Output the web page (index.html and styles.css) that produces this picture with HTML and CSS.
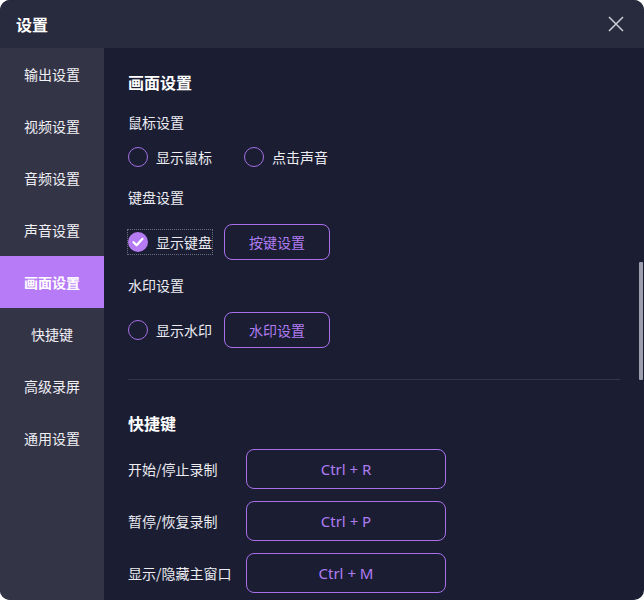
FILE: index.html
```html
<!DOCTYPE html>
<html lang="zh">
<head>
<meta charset="utf-8">
<title>设置</title>
<link rel="stylesheet" href="styles.css">
</head>
<body>
<div class="window">
  <header class="titlebar">
    <span class="title">设置</span>
    <svg class="close" width="16" height="16" viewBox="0 0 16 16"><path d="M1 1L15 15M15 1L1 15" stroke="#c9c9d3" stroke-width="1.6" fill="none"/></svg>
  </header>
  <div class="main">
    <nav class="sidebar">
      <div class="nav-item">输出设置</div>
      <div class="nav-item">视频设置</div>
      <div class="nav-item">音频设置</div>
      <div class="nav-item">声音设置</div>
      <div class="nav-item active">画面设置</div>
      <div class="nav-item">快捷键</div>
      <div class="nav-item">高级录屏</div>
      <div class="nav-item">通用设置</div>
    </nav>
    <section class="content">
      <h2 class="heading">画面设置</h2>
      <div class="label">鼠标设置</div>
      <div class="row row-radio">
        <label class="option"><span class="radio"></span>显示鼠标</label>
        <label class="option opt-second"><span class="radio"></span>点击声音</label>
      </div>
      <div class="label">键盘设置</div>
      <div class="row row-btn">
        <label class="option focused"><span class="check"><svg width="20" height="20" viewBox="0 0 20 20"><path d="M5.5 10.2L8.6 13.2L14.5 6.8" stroke="#fff" stroke-width="2.2" fill="none" stroke-linecap="round" stroke-linejoin="round"/></svg></span>显示键盘</label>
        <button class="btn">按键设置</button>
      </div>
      <div class="label">水印设置</div>
      <div class="row row-btn">
        <label class="option"><span class="radio"></span>显示水印</label>
        <button class="btn">水印设置</button>
      </div>
      <div class="divider"></div>
      <h2 class="heading heading2">快捷键</h2>
      <div class="hk-row"><span class="hk-label">开始/停止录制</span><button class="hk-btn">Ctrl + R</button></div>
      <div class="hk-row"><span class="hk-label">暂停/恢复录制</span><button class="hk-btn">Ctrl + P</button></div>
      <div class="hk-row"><span class="hk-label">显示/隐藏主窗口</span><button class="hk-btn">Ctrl + M</button></div>
      <div class="scrollbar"></div>
    </section>
  </div>
</div>
</body>
</html>
```

FILE: styles.css
```css
* { box-sizing: border-box; }
html, body { margin: 0; padding: 0; background: #ffffff; }
body {
  width: 644px;
  height: 600px;
  overflow: hidden;
  font-family: "Noto Sans CJK SC", "Noto Sans", sans-serif;
  color: #ececf2;
}
.window {
  width: 644px;
  height: 600px;
  border-radius: 10px;
  overflow: hidden;
  background: #1b1e33;
  display: flex;
  flex-direction: column;
}
.titlebar {
  height: 48px;
  flex: none;
  background: #282a3d;
  display: flex;
  align-items: center;
  justify-content: space-between;
  padding: 0 20px 0 16px;
}
.title {
  font-size: 16px;
  font-weight: 700;
  color: #ffffff;
  line-height: 20px;
}
.close { display: block; }
.main {
  flex: 1;
  display: flex;
  min-height: 0;
}
.sidebar {
  width: 104px;
  flex: none;
  background: #343447;
  display: flex;
  flex-direction: column;
}
.nav-item {
  height: 52px;
  display: flex;
  align-items: center;
  justify-content: center;
  font-size: 14px;
  line-height: 18px;
  padding-bottom: 1px;
  color: #f0f0f5;
}
.nav-item.active {
  background: #b87bf7;
  color: #ffffff;
  font-weight: 700;
}
.content {
  flex: 1;
  position: relative;
  padding: 24px 24px 0 24px;
  display: flex;
  flex-direction: column;
}
.heading {
  margin: 0;
  font-size: 16px;
  line-height: 20px;
  font-weight: 700;
  color: #ffffff;
}
.label {
  font-size: 14px;
  line-height: 20px;
  margin-top: 20px;
  color: #ececf2;
}
.row {
  display: flex;
  align-items: center;
}
.row-radio { margin-top: 15px; height: 20px; }
.row-btn { margin-top: 17px; height: 36px; margin-bottom: -2px; }
.row-btn + .label { margin-top: 17px; }
.option {
  display: flex;
  align-items: center;
  font-size: 14px;
  line-height: 20px;
  color: #ececf2;
  gap: 8px;
}
.opt-second { margin-left: 32px; }
.radio {
  width: 20px;
  height: 20px;
  border-radius: 50%;
  border: 1.5px solid #a56fe6;
  flex: none;
}
.check {
  width: 20px;
  height: 20px;
  border-radius: 50%;
  background: #b47bf3;
  flex: none;
}
.check svg { display: block; }
.focused {
  padding: 2px 0;
  margin: -2px 0;
  outline: 1px dotted #6b6d80;
  outline-offset: 0;
}
.btn {
  margin-left: 12px;
  width: 106px;
  height: 36px;
  border: 1.5px solid #a86fea;
  border-radius: 8px;
  background: transparent;
  color: #b07cf2;
  font-family: inherit;
  font-size: 14px;
  padding: 0;
}
.divider {
  margin-top: 33px;
  height: 1px;
  background: #323447;
}
.heading2 { margin-top: 33px; }
.hk-row {
  display: flex;
  align-items: center;
  margin-top: 12px;
}
.heading2 + .hk-row { margin-top: 16px; }
.hk-label {
  width: 118px;
  font-size: 14px;
  color: #ececf2;
  white-space: nowrap;
}
.hk-btn {
  width: 200px;
  height: 40px;
  border: 1.5px solid #a86fea;
  border-radius: 8px;
  background: transparent;
  color: #b07cf2;
  font-family: "Noto Sans", "Noto Sans CJK SC", sans-serif;
  font-size: 15px;
  padding: 0;
}
.scrollbar {
  position: absolute;
  right: 1px;
  top: 214px;
  width: 4px;
  height: 118px;
  background: #9e9eae;
  border-radius: 1px;
}
```
